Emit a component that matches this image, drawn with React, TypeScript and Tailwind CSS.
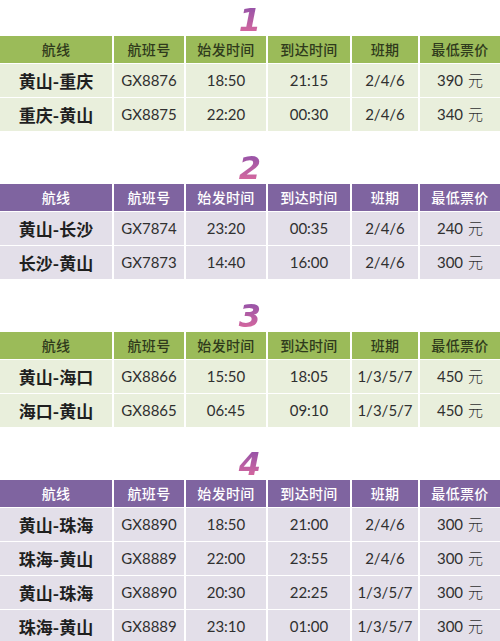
import React from 'react';

type Flight = {
  route: string;
  no: string;
  dep: string;
  arr: string;
  days: string;
  price: string;
};

const sections: { num: string; theme: 'green' | 'purple'; rows: Flight[] }[] = [
  {
    num: '1',
    theme: 'green',
    rows: [
      { route: '黄山-重庆', no: 'GX8876', dep: '18:50', arr: '21:15', days: '2/4/6', price: '390' },
      { route: '重庆-黄山', no: 'GX8875', dep: '22:20', arr: '00:30', days: '2/4/6', price: '340' },
    ],
  },
  {
    num: '2',
    theme: 'purple',
    rows: [
      { route: '黄山-长沙', no: 'GX7874', dep: '23:20', arr: '00:35', days: '2/4/6', price: '240' },
      { route: '长沙-黄山', no: 'GX7873', dep: '14:40', arr: '16:00', days: '2/4/6', price: '300' },
    ],
  },
  {
    num: '3',
    theme: 'green',
    rows: [
      { route: '黄山-海口', no: 'GX8866', dep: '15:50', arr: '18:05', days: '1/3/5/7', price: '450' },
      { route: '海口-黄山', no: 'GX8865', dep: '06:45', arr: '09:10', days: '1/3/5/7', price: '450' },
    ],
  },
  {
    num: '4',
    theme: 'purple',
    rows: [
      { route: '黄山-珠海', no: 'GX8890', dep: '18:50', arr: '21:00', days: '2/4/6', price: '300' },
      { route: '珠海-黄山', no: 'GX8889', dep: '22:00', arr: '23:55', days: '2/4/6', price: '300' },
      { route: '黄山-珠海', no: 'GX8890', dep: '20:30', arr: '22:25', days: '1/3/5/7', price: '300' },
      { route: '珠海-黄山', no: 'GX8889', dep: '23:10', arr: '01:00', days: '1/3/5/7', price: '300' },
    ],
  },
];

const headers = ['航线', '航班号', '始发时间', '到达时间', '班期', '最低票价'];

const Section = ({ num, theme, rows }: { num: string; theme: 'green' | 'purple'; rows: Flight[] }) => {
  const head = theme === 'green' ? 'bg-[#9bbb59] text-[#2f3a1c]' : 'bg-[#7f64a0] text-white';
  const cell = theme === 'green' ? 'bg-[#e9efdc]' : 'bg-[#e3dfe9]';
  return (
    <div>
      <div className="h-[32px] flex items-center justify-center">
        <span className="text-[32px] leading-[32px] font-bold italic bg-gradient-to-b from-[#8e4fa8] to-[#e06a9c] bg-clip-text text-transparent px-[8px] font-['DejaVu_Sans',sans-serif]">
          {num}
        </span>
      </div>
      <div className="grid grid-cols-[112px_70px_80px_82px_66px_1fr] gap-x-[2px] gap-y-[1px] bg-white">
        {headers.map((h) => (
          <div
            key={h}
            className={`${head} h-[27px] flex items-center justify-center text-[14px] font-medium tracking-wide font-['Noto_Sans_CJK_SC',sans-serif]`}
          >
            {h}
          </div>
        ))}
        {rows.map((r, i) => (
          <React.Fragment key={i}>
            <div
              className={`${cell} h-[33px] flex items-center justify-center text-[17px] font-bold text-[#1f1f1f] font-['Noto_Sans_CJK_SC',sans-serif]`}
            >
              {r.route}
            </div>
            {[r.no, r.dep, r.arr, r.days].map((v, j) => (
              <div
                key={j}
                className={`${cell} h-[33px] flex items-center justify-center text-[15px] text-[#303030] font-['Lato','Noto_Sans_CJK_SC',sans-serif]`}
              >
                {v}
              </div>
            ))}
            <div
              className={`${cell} h-[33px] flex items-center justify-center text-[15px] text-[#303030] font-['Lato','Noto_Sans_CJK_SC',sans-serif]`}
            >
              {r.price}
              <span className="ml-[5px] text-[15px] font-light font-['Noto_Sans_CJK_SC',sans-serif]">元</span>
            </div>
          </React.Fragment>
        ))}
      </div>
    </div>
  );
};

export default function App() {
  return (
    <div className="w-[500px] h-[641px] overflow-hidden bg-white pt-[4px] flex flex-col gap-[21px]">
      {sections.map((s) => (
        <Section key={s.num} {...s} />
      ))}
    </div>
  );
}
